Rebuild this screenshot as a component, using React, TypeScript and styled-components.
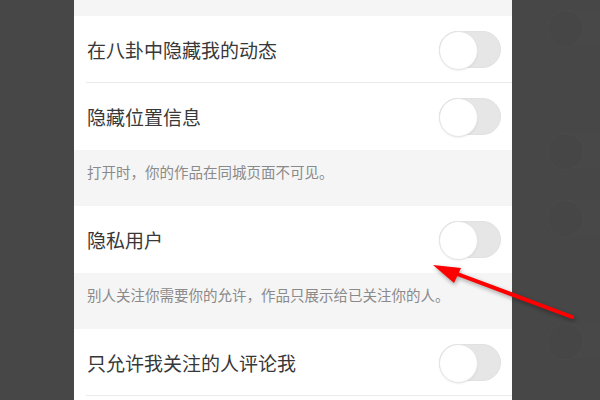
import React, { FC } from 'react';
import styled, { createGlobalStyle } from 'styled-components';

const GlobalStyle = createGlobalStyle`
    html, body {
        margin: 0;
        padding: 0;
        background: #474747;
    }
    * {
        box-sizing: border-box;
    }
`;

interface SettingItem {
    label: string;
    note?: string;
    divider?: boolean;
}

const items: Array<SettingItem> = [
    { label: '在八卦中隐藏我的动态', divider: true },
    { label: '隐藏位置信息', note: '打开时，你的作品在同城页面不可见。' },
    { label: '隐私用户', note: '别人关注你需要你的允许，作品只展示给已关注你的人。' },
    { label: '只允许我关注的人评论我', divider: true },
];

const ghostTops = [10, 88, 32, 88];

const App: FC = () => {
    return (
        <Screen>
            <GlobalStyle />
            <Shade />
            <Phone>
                <TopStrip />
                {items.map((item, index) => (
                    <React.Fragment key={'item_' + index}>
                        <Row divider={item.divider}>
                            <Label>{item.label}</Label>
                            <Toggle />
                        </Row>
                        {item.note && <Note>{item.note}</Note>}
                    </React.Fragment>
                ))}
                <Row />
            </Phone>
            <RightShade>
                {ghostTops.map((top, index) => (
                    <GhostToggle key={'ghost_' + index} top={top} />
                ))}
            </RightShade>
            <Arrow width="600" height="400" viewBox="0 0 600 400">
                <line x1="572" y1="317" x2="452" y2="272" stroke="#ff0000" strokeWidth="4" strokeLinecap="round" />
                <polygon points="433,265 461,268 454,283" fill="#ff0000" />
            </Arrow>
        </Screen>
    );
};

const Screen = styled.div`
    position: relative;
    width: 600px;
    height: 400px;
    overflow: hidden;
    display: flex;
    background: #474747;
    font-family: "Noto Sans CJK SC", "Noto Sans", sans-serif;
`;

const Shade = styled.div`
    width: 74px;
    flex-shrink: 0;
    background: #474747;
`;

const Phone = styled.div`
    width: 438px;
    flex-shrink: 0;
    background: #ffffff;
    display: flex;
    flex-direction: column;
`;

const TopStrip = styled.div`
    height: 16px;
    flex-shrink: 0;
    background: #f5f5f5;
`;

const Row = styled.div<{ divider?: boolean }>`
    position: relative;
    height: 67px;
    flex-shrink: 0;
    display: flex;
    align-items: center;
    justify-content: space-between;
    padding: 0 11px 0 13px;
    background: #ffffff;
    &::after {
        content: '';
        display: ${(p) => (p.divider ? 'block' : 'none')};
        position: absolute;
        left: 12px;
        right: 0;
        bottom: 0;
        height: 1px;
        background: #ebebeb;
    }
`;

const Label = styled.span`
    font-size: 19px;
    color: #383838;
    line-height: 1;
`;

const Toggle = styled.div`
    position: relative;
    width: 62px;
    height: 37px;
    border-radius: 19px;
    background: #e6e6e6;
    border: 1px solid #e1e1e1;
    &::after {
        content: '';
        position: absolute;
        left: -1px;
        top: -1px;
        width: 37px;
        height: 37px;
        border-radius: 50%;
        background: #ffffff;
        border: 1px solid #e4e4e4;
        box-shadow: 0 1px 2px rgba(0, 0, 0, 0.06);
    }
`;

const Note = styled.div`
    height: 56px;
    flex-shrink: 0;
    background: #f5f5f5;
    padding: 13px 0 0 13px;
    font-size: 14.5px;
    line-height: 18px;
    color: #8a8a8a;
`;

const RightShade = styled.div`
    flex: 1;
    background: #474747;
    display: flex;
    flex-direction: column;
    padding-left: 35px;
`;

const GhostToggle = styled.div<{ top: number }>`
    position: relative;
    margin-top: ${(p) => p.top}px;
    width: 70px;
    height: 35px;
    border-radius: 18px;
    background: rgba(255, 255, 255, 0.008);
    &::after {
        content: '';
        position: absolute;
        left: 0;
        top: 0;
        width: 35px;
        height: 35px;
        border-radius: 50%;
        border: 1px solid rgba(255, 255, 255, 0.018);
        background: rgba(0, 0, 0, 0.015);
    }
`;

const Arrow = styled.svg`
    position: absolute;
    left: 0;
    top: 0;
    pointer-events: none;
    filter: drop-shadow(1px 2px 2px rgba(0, 0, 0, 0.35));
`;

export default App;
